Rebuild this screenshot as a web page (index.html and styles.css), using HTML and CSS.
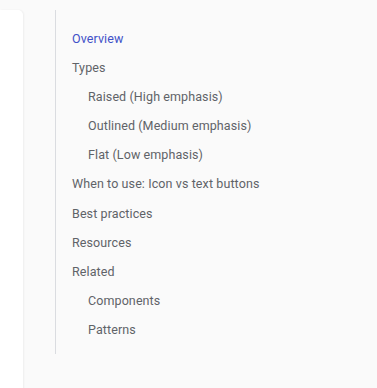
FILE: index.html
```html
<!DOCTYPE html>
<html lang="en">
<head>
    <meta charset="UTF-8">
    <meta name="viewport" content="width=device-width, initial-scale=1.0">
    <title>Buttons | Contents</title>
    <link rel="stylesheet" href="styles.css">
</head>
<body>

<div class="page">
    <div class="card"></div>
    <nav class="toc">
        <ul>
            <li class="active">Overview</li>
            <li>Types</li>
            <li class="sub">Raised (High emphasis)</li>
            <li class="sub">Outlined (Medium emphasis)</li>
            <li class="sub">Flat (Low emphasis)</li>
            <li>When to use: Icon vs text buttons</li>
            <li>Best practices</li>
            <li>Resources</li>
            <li>Related</li>
            <li class="sub">Components</li>
            <li class="sub">Patterns</li>
        </ul>
    </nav>
</div>

</body>
</html>
```

FILE: styles.css
```css
body{
    margin:0;
    background-color:#fafafa;
    font-family: Roboto, 'Noto Sans', sans-serif;
}
.page{
    display:flex;
    align-items:flex-start;
    height:388px;
    overflow:hidden;
}
.card{
    width:23px;
    height:400px;
    margin-top:10px;
    background-color:#fff;
    border-radius:0 5px 0 0;
    box-shadow: 1px 0 2px rgba(0,0,0,.05);
}
.toc{
    margin-left:32px;
    margin-top:10px;
    border-left:1px solid #dadce0;
}
.toc ul{
    list-style:none;
    margin:0;
    padding:14px 0 10px 16px;
}
.toc li{
    font-size:12.5px;
    line-height:29.1px;
    color:#5f6368;
    letter-spacing:.1px;
}
.toc li.sub{
    padding-left:16px;
}
.toc li.active{
    color:#3f51c8;
}
```
